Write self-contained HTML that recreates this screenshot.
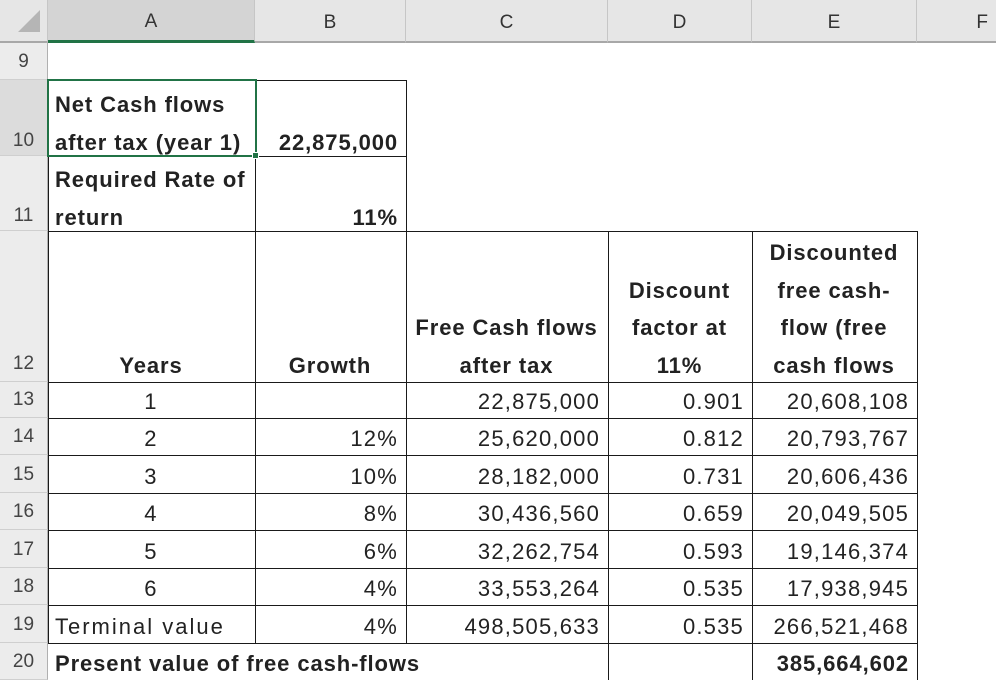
<!DOCTYPE html>
<html><head><style>
*{margin:0;padding:0;box-sizing:border-box}
body{width:996px;height:680px;background:#fff;position:relative;overflow:hidden;font-family:"Liberation Sans",Arial,sans-serif;color:#222}
.h{position:absolute;top:0;height:43px;background:#e6e6e6;border-bottom:2px solid #a8a8a8;border-right:1px solid #c6c6c6;font-size:19px;color:#333;display:flex;align-items:center;justify-content:center;padding-top:4px}
.r{position:absolute;left:0;width:48px;background:#ececec;border-bottom:1px solid #cfcfcf;border-right:1px solid #b0b0b0;font-size:19px;color:#444;display:flex;align-items:flex-end;justify-content:center;padding-bottom:6px}
.c{position:absolute;font-size:22px;letter-spacing:1.2px;line-height:37.5px;display:flex;flex-direction:column;justify-content:flex-end;padding:0 8px 0 7px;white-space:nowrap;transform:translateY(2px)}
.t{transform:translateY(5px)}
.b{font-weight:bold;letter-spacing:0.9px}
.R{text-align:right}.C{text-align:center}
.bx{border:1.5px solid #1a1a1a}
</style></head><body>
<div class="h" style="left:0;width:48px;background:#e6e6e6"><svg width="30" height="30" style="position:absolute;right:5px;bottom:5px"><polygon points="28,4 28,26 6,26" fill="#b5b5b5"/></svg></div>
<div class="h" style="left:48px;width:207px;background:#d4d4d4;border-bottom:3px solid #217346">A</div>
<div class="h" style="left:255px;width:151px">B</div>
<div class="h" style="left:406px;width:202px">C</div>
<div class="h" style="left:608px;width:144px">D</div>
<div class="h" style="left:752px;width:165px">E</div>
<div class="h" style="left:917px;width:79px;border-right:none;justify-content:flex-end;padding-right:8px">F</div>

<div class="r" style="top:43px;height:37px">9</div>
<div class="r" style="top:80px;height:76px;background:#dcdcdc;padding-bottom:3px">10</div>
<div class="r" style="top:156px;height:75px;padding-bottom:3px">11</div>
<div class="r" style="top:231px;height:151px">12</div>
<div class="r" style="top:382px;height:36px">13</div>
<div class="r" style="top:418px;height:37px">14</div>
<div class="r" style="top:455px;height:38px">15</div>
<div class="r" style="top:493px;height:37px">16</div>
<div class="r" style="top:530px;height:38px">17</div>
<div class="r" style="top:568px;height:37px">18</div>
<div class="r" style="top:605px;height:38px">19</div>
<div class="r" style="top:643px;height:37px">20</div>

<div class="bx" style="position:absolute;left:48px;top:80px;width:208px;height:77px"></div>
<div class="bx" style="position:absolute;left:255px;top:80px;width:152px;height:77px"></div>
<div class="bx" style="position:absolute;left:48px;top:156px;width:208px;height:76px"></div>
<div class="bx" style="position:absolute;left:255px;top:156px;width:152px;height:76px"></div>
<div style="position:absolute;left:48px;top:231px;width:870px;height:413px;border:1.5px solid #1a1a1a"></div>
<div style="position:absolute;left:254.5px;top:231px;width:1.5px;height:413px;background:#1a1a1a"></div>
<div style="position:absolute;left:405.5px;top:231px;width:1.5px;height:413px;background:#1a1a1a"></div>
<div style="position:absolute;left:607.5px;top:231px;width:1.5px;height:449px;background:#1a1a1a"></div>
<div style="position:absolute;left:751.5px;top:231px;width:1.5px;height:449px;background:#1a1a1a"></div>
<div style="position:absolute;left:916.5px;top:231px;width:1.5px;height:449px;background:#1a1a1a"></div>
<div style="position:absolute;left:48px;top:381.5px;width:870px;height:1.5px;background:#1a1a1a"></div>
<div style="position:absolute;left:48px;top:417.5px;width:870px;height:1.5px;background:#1a1a1a"></div>
<div style="position:absolute;left:48px;top:454.5px;width:870px;height:1.5px;background:#1a1a1a"></div>
<div style="position:absolute;left:48px;top:492.5px;width:870px;height:1.5px;background:#1a1a1a"></div>
<div style="position:absolute;left:48px;top:529.5px;width:870px;height:1.5px;background:#1a1a1a"></div>
<div style="position:absolute;left:48px;top:567.5px;width:870px;height:1.5px;background:#1a1a1a"></div>
<div style="position:absolute;left:48px;top:604.5px;width:870px;height:1.5px;background:#1a1a1a"></div>

<div style="position:absolute;left:47px;top:79px;width:210px;height:78px;border:2px solid #217346"></div>
<div style="position:absolute;left:252px;top:152px;width:7px;height:7px;background:#217346;border:1px solid #fff"></div>

<div class="c b t" style="left:48px;top:80px;width:207px;height:76px"><div>Net Cash flows</div><div>after tax (year 1)</div></div>
<div class="c b R t" style="left:255px;top:80px;width:151px;height:76px"><div>22,875,000</div></div>
<div class="c b t" style="left:48px;top:156px;width:207px;height:75px"><div>Required Rate of</div><div>return</div></div>
<div class="c b R t" style="left:255px;top:156px;width:151px;height:75px"><div>11%</div></div>

<div class="c b C" style="left:48px;top:231px;width:207px;height:151px"><div>Years</div></div>
<div class="c b C" style="left:255px;top:231px;width:151px;height:151px"><div>Growth</div></div>
<div class="c b C" style="left:406px;top:231px;width:202px;height:151px"><div>Free Cash flows</div><div>after tax</div></div>
<div class="c b C" style="left:608px;top:231px;width:144px;height:151px"><div>Discount</div><div>factor at</div><div>11%</div></div>
<div class="c b C" style="left:752px;top:231px;width:165px;height:151px"><div>Discounted</div><div>free cash-</div><div>flow (free</div><div>cash flows</div></div>

<div class="c C" style="left:48px;top:382px;width:207px;height:36px">1</div>
<div class="c R" style="left:406px;top:382px;width:202px;height:36px">22,875,000</div>
<div class="c R" style="left:608px;top:382px;width:144px;height:36px">0.901</div>
<div class="c R" style="left:752px;top:382px;width:165px;height:36px">20,608,108</div>

<div class="c C" style="left:48px;top:418px;width:207px;height:37px">2</div>
<div class="c R" style="left:255px;top:418px;width:151px;height:37px">12%</div>
<div class="c R" style="left:406px;top:418px;width:202px;height:37px">25,620,000</div>
<div class="c R" style="left:608px;top:418px;width:144px;height:37px">0.812</div>
<div class="c R" style="left:752px;top:418px;width:165px;height:37px">20,793,767</div>

<div class="c C" style="left:48px;top:455px;width:207px;height:38px">3</div>
<div class="c R" style="left:255px;top:455px;width:151px;height:38px">10%</div>
<div class="c R" style="left:406px;top:455px;width:202px;height:38px">28,182,000</div>
<div class="c R" style="left:608px;top:455px;width:144px;height:38px">0.731</div>
<div class="c R" style="left:752px;top:455px;width:165px;height:38px">20,606,436</div>

<div class="c C" style="left:48px;top:493px;width:207px;height:37px">4</div>
<div class="c R" style="left:255px;top:493px;width:151px;height:37px">8%</div>
<div class="c R" style="left:406px;top:493px;width:202px;height:37px">30,436,560</div>
<div class="c R" style="left:608px;top:493px;width:144px;height:37px">0.659</div>
<div class="c R" style="left:752px;top:493px;width:165px;height:37px">20,049,505</div>

<div class="c C" style="left:48px;top:530px;width:207px;height:38px">5</div>
<div class="c R" style="left:255px;top:530px;width:151px;height:38px">6%</div>
<div class="c R" style="left:406px;top:530px;width:202px;height:38px">32,262,754</div>
<div class="c R" style="left:608px;top:530px;width:144px;height:38px">0.593</div>
<div class="c R" style="left:752px;top:530px;width:165px;height:38px">19,146,374</div>

<div class="c C" style="left:48px;top:568px;width:207px;height:37px">6</div>
<div class="c R" style="left:255px;top:568px;width:151px;height:37px">4%</div>
<div class="c R" style="left:406px;top:568px;width:202px;height:37px">33,553,264</div>
<div class="c R" style="left:608px;top:568px;width:144px;height:37px">0.535</div>
<div class="c R" style="left:752px;top:568px;width:165px;height:37px">17,938,945</div>

<div class="c" style="left:48px;top:605px;width:207px;height:38px;letter-spacing:2px">Terminal value</div>
<div class="c R" style="left:255px;top:605px;width:151px;height:38px">4%</div>
<div class="c R" style="left:406px;top:605px;width:202px;height:38px">498,505,633</div>
<div class="c R" style="left:608px;top:605px;width:144px;height:38px">0.535</div>
<div class="c R" style="left:752px;top:605px;width:165px;height:38px">266,521,468</div>

<div class="c b" style="left:48px;top:643px;width:500px;height:37px">Present value of free cash-flows</div>
<div class="c b R" style="left:752px;top:643px;width:165px;height:37px">385,664,602</div>
</body></html>
